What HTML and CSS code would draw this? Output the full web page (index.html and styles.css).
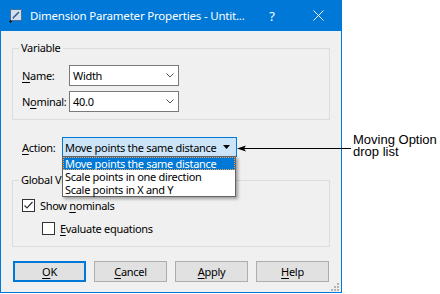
FILE: index.html
```html
<!DOCTYPE html>
<html lang="en">
<head>
<meta charset="utf-8">
<title>Dimension Parameter Properties</title>
<link rel="stylesheet" href="styles.css">
</head>
<body>
<div class="stage">
  <div class="window">
    <div class="titlebar">
      <svg class="app-icon" width="13" height="14" viewBox="0 0 13 14">
        <rect x="1.5" y="0.5" width="11" height="11" fill="#cfe0f1" stroke="#4a6f96"/>
        <path d="M4 9 L10 3" stroke="#3b5b80" stroke-width="1.6"/>
        <path d="M4 9 L3.4 10.4 L4.8 9.8 Z" fill="#3b5b80"/>
        <path d="M0 12.5 H3 M1.5 11 V14" stroke="#1a1a1a" stroke-width="1"/>
      </svg>
      <span class="title">Dimension Parameter Properties - Untit...</span>
      <span class="cap-btn help">?</span>
      <span class="cap-btn close">
        <svg width="11" height="11" viewBox="0 0 11 11"><path d="M0.5 0.5 L10.5 10.5 M10.5 0.5 L0.5 10.5" stroke="#fff" stroke-width="1"/></svg>
      </span>
    </div>
    <div class="client">
      <fieldset class="group group-variable">
        <legend>Variable</legend>
        <div class="field-row">
          <span class="field-label"><u>N</u>ame:</span>
          <div class="combo"><span>Width</span>
            <svg class="chevron" width="8" height="5" viewBox="0 0 8 5"><path d="M0.5 0.5 L4 4 L7.5 0.5" fill="none" stroke="#555" stroke-width="1"/></svg>
          </div>
        </div>
        <div class="field-row">
          <span class="field-label">N<u>o</u>minal:</span>
          <div class="combo"><span>40.0</span>
            <svg class="chevron" width="8" height="5" viewBox="0 0 8 5"><path d="M0.5 0.5 L4 4 L7.5 0.5" fill="none" stroke="#555" stroke-width="1"/></svg>
          </div>
        </div>
      </fieldset>

      <div class="action-row">
        <span class="action-label"><u>A</u>ction:</span>
        <div class="action-combo">
          <span>Move points the same distance</span>
          <svg class="triangle" width="7" height="4" viewBox="0 0 7 4"><path d="M0 0 H7 L3.5 4 Z" fill="#000"/></svg>
          <ul class="dropdown">
            <li class="item selected">Move points the same distance</li>
            <li class="item">Scale points in one direction</li>
            <li class="item">Scale points in X and Y</li>
          </ul>
        </div>
      </div>

      <fieldset class="group group-global">
        <legend>Global View</legend>
        <div class="check-row">
          <span class="checkbox">
            <svg width="11" height="11" viewBox="0 0 11 11"><path d="M1.5 5.5 L4 8 L9.5 2" fill="none" stroke="#333" stroke-width="1.2"/></svg>
          </span>
          <span>Show <u>n</u>ominals</span>
        </div>
        <div class="check-row indent">
          <span class="checkbox"></span>
          <span><u>E</u>valuate equations</span>
        </div>
      </fieldset>

      <div class="buttons">
        <span class="btn btn-default"><u>O</u>K</span>
        <span class="btn"><u>C</u>ancel</span>
        <span class="btn"><u>A</u>pply</span>
        <span class="btn"><u>H</u>elp</span>
      </div>

      <svg class="grip" width="10" height="10" viewBox="0 0 10 10">
        <rect x="7" y="1" width="2" height="2" fill="#b4b4b4"/>
        <rect x="4" y="4" width="2" height="2" fill="#b4b4b4"/>
        <rect x="7" y="4" width="2" height="2" fill="#b4b4b4"/>
        <rect x="1" y="7" width="2" height="2" fill="#b4b4b4"/>
        <rect x="4" y="7" width="2" height="2" fill="#b4b4b4"/>
        <rect x="7" y="7" width="2" height="2" fill="#b4b4b4"/>
      </svg>
    </div>
  </div>

  <div class="annotation">
    <span class="anno-line">Moving Option</span>
    <span class="anno-line">drop list</span>
  </div>

  <svg class="callout-arrow" width="115" height="7" viewBox="0 0 115 7">
    <path d="M6 3.5 H114" stroke="#000" stroke-width="1"/>
    <path d="M0 3.5 L9 0.5 L7 3.5 L9 6.5 Z" fill="#000"/>
  </svg>
</div>
</body>
</html>
```

FILE: styles.css
```css
* { box-sizing: border-box; }

body {
  margin: 0;
  background: #ffffff;
  font-family: "Noto Sans", "Open Sans", sans-serif;
  font-size: 11px;
  letter-spacing: -0.3px;
  color: #000;
}

u { text-underline-offset: 2px; }

.stage {
  position: relative;
  display: flex;
  width: 440px;
  height: 294px;
}

.window {
  width: 342px;
  height: 293px;
  border: 1px solid #0078d7;
  border-top: 0;
  display: flex;
  flex-direction: column;
  background: #f0f0f0;
  flex: none;
}

.titlebar {
  height: 31px;
  flex: none;
  background: #0078d7;
  color: #fff;
  display: flex;
  align-items: center;
  padding-left: 8px;
}

.app-icon { flex: none; margin-top: 1px; }

.title {
  flex: 1;
  margin-left: 8px;
  font-size: 11.5px;
  letter-spacing: -0.2px;
  white-space: nowrap;
}

.cap-btn {
  width: 46px;
  height: 31px;
  display: flex;
  align-items: center;
  justify-content: center;
  flex: none;
}

.help { font-size: 13px; letter-spacing: 0; }

.client {
  flex: 1;
  position: relative;
  display: flex;
  flex-direction: column;
  padding: 10px 11px 0;
}

.group {
  margin: 0;
  min-width: 0;
  border: 1px solid #dcdcdc;
  padding: 10px 9px 7px;
}

.group legend {
  padding: 0 2px;
  margin-left: -3px;
  height: 14px;
  line-height: 14px;
}

.field-row {
  display: flex;
  align-items: center;
  height: 21px;
}

.field-row + .field-row { margin-top: 5px; }

.field-label { width: 47px; flex: none; }

.combo {
  width: 110px;
  height: 21px;
  border: 1px solid #7a7a7a;
  background: #fff;
  display: flex;
  align-items: center;
  padding-left: 3px;
}

.chevron { margin-left: auto; margin-right: 4px; }

.action-row {
  margin-top: 17px;
  display: flex;
  align-items: center;
  height: 20px;
  padding-left: 10px;
}

.action-label { width: 40px; flex: none; }

.action-combo {
  position: relative;
  width: 175px;
  height: 20px;
  border: 1px solid #0078d7;
  background: #cce4f7;
  display: flex;
  align-items: center;
  padding-left: 2px;
}

.triangle { margin-left: auto; margin-right: 6px; }

.dropdown {
  position: absolute;
  z-index: 2;
  top: 18px;
  left: -1px;
  width: 174px;
  margin: 0;
  padding: 0;
  list-style: none;
  background: #fff;
  border: 1px solid #646464;
  box-shadow: 2px 2px 3px rgba(0, 0, 0, 0.35);
}

.item {
  height: 13px;
  line-height: 13px;
  padding-left: 2px;
  white-space: nowrap;
}

.item.selected {
  background: #0078d7;
  color: #fff;
  outline: 1px dotted #f2a14b;
  outline-offset: -1px;
}

.group-global {
  margin-top: 16px;
  padding: 12px 9px 11px;
}

.check-row {
  display: flex;
  align-items: center;
  height: 13px;
}

.check-row + .check-row { margin-top: 10px; }
.check-row.indent { padding-left: 20px; }

.checkbox {
  width: 13px;
  height: 13px;
  flex: none;
  border: 1px solid #333;
  background: #fff;
  margin-right: 5px;
  display: flex;
  align-items: center;
  justify-content: center;
}

.buttons {
  margin-top: 14px;
  display: flex;
  gap: 8px;
  padding-left: 1px;
}

.btn {
  width: 73px;
  height: 21px;
  border: 1px solid #adadad;
  background: #e1e1e1;
  display: flex;
  align-items: center;
  justify-content: center;
}

.btn-default { border: 2px solid #0078d7; }

.grip {
  position: absolute;
  right: 1px;
  bottom: 0;
}

.annotation {
  margin-left: 11px;
  margin-top: 133px;
  display: flex;
  flex-direction: column;
  font-family: "Liberation Sans", Arial, sans-serif;
  font-size: 13px;
  line-height: 13px;
  letter-spacing: 0;
  white-space: nowrap;
}

.anno-line { display: block; height: 12px; }

.callout-arrow {
  position: absolute;
  left: 237px;
  top: 145px;
}
```
